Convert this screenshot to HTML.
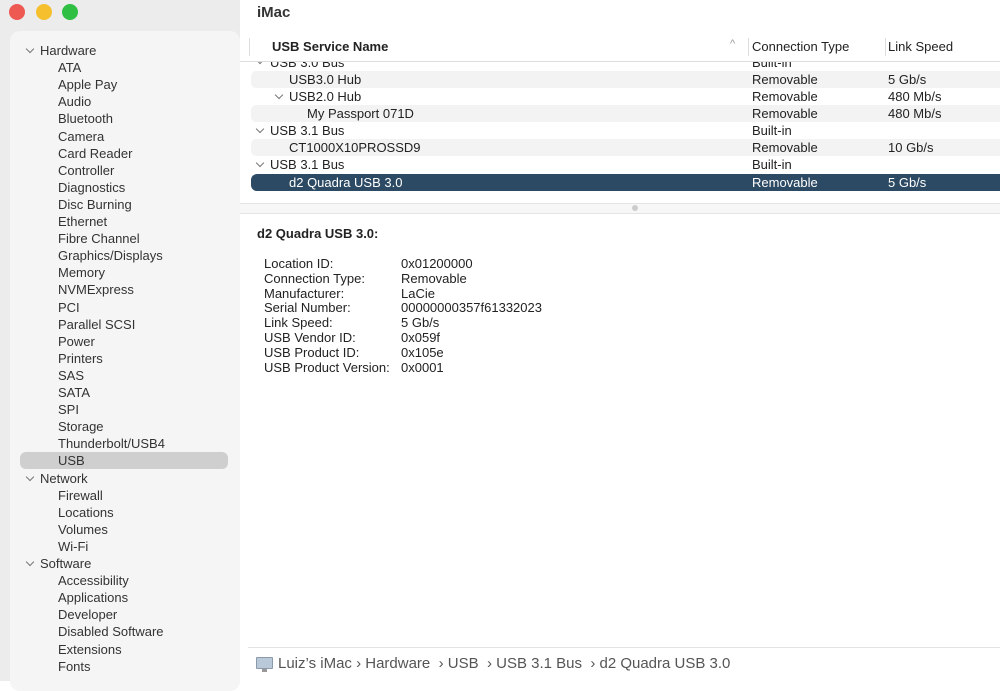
<!DOCTYPE html>
<html><head><meta charset="utf-8"><style>
*{margin:0;padding:0;box-sizing:border-box}
body{width:1000px;height:681px;overflow:hidden;font-family:"Liberation Sans",sans-serif;font-size:13px;color:#222;background:#fff;position:relative}
.side{position:absolute;left:0;top:0;width:240px;height:681px;background:#ececec}
.panel{position:absolute;left:10px;top:31px;width:230px;height:660px;background:#f5f5f5;border-radius:10px}
.dot{position:absolute;top:4px;width:16px;height:16px;border-radius:50%}
.si{position:absolute;height:17px;line-height:17px;font-size:13px;color:#333}
.chev{display:inline-block;width:6px;height:6px;border-right:1.3px solid #777;border-bottom:1.3px solid #777;transform:rotate(45deg);position:absolute}
.main{position:absolute;left:240px;top:0;width:760px;height:681px;background:#fff}
.row{position:absolute;left:11px;width:749px;height:17px;line-height:17px}
.g{background:#f3f3f3;border-radius:5px 0 0 5px}
.c2{position:absolute;left:501px}.c3{position:absolute;left:637px}
.kv{position:absolute;left:24px;line-height:14.8px;font-size:13px}
</style></head><body>
<div class="side">
<div class="dot" style="left:9px;background:#ee5a52"></div>
<div class="dot" style="left:36px;background:#f5bf2e"></div>
<div class="dot" style="left:62px;background:#2fc043"></div>
<div class="panel"></div>
<div style="position:absolute;left:20px;top:452px;width:208px;height:17px;background:#cfcfcf;border-radius:6px"></div>
<div id="sb"></div>
</div>
<div class="main">
<div style="position:absolute;left:17px;top:4px;font-size:15px;font-weight:bold;color:#333">iMac</div>
<div style="position:absolute;left:9px;top:38px;width:1px;height:18px;background:#ddd"></div>
<div style="position:absolute;left:32px;top:39px;font-weight:bold">USB Service Name</div>
<div style="position:absolute;left:490px;top:38px;color:#999;font-size:11px">^</div>
<div style="position:absolute;left:508px;top:38px;width:1px;height:18px;background:#ddd"></div>
<div style="position:absolute;left:512px;top:39px">Connection Type</div>
<div style="position:absolute;left:645px;top:38px;width:1px;height:18px;background:#ddd"></div>
<div style="position:absolute;left:648px;top:39px">Link Speed</div>
<div style="position:absolute;left:0;top:61px;width:760px;height:1px;background:#ddd"></div>
<div style="position:absolute;left:0;top:62px;width:760px;height:130px;overflow:hidden">
<div class="row" style="top:-8px"><span class="chev" style="left:6px;top:3px"></span><span style="position:absolute;left:19px">USB 3.0 Bus</span><span class="c2">Built-in</span></div>
<div class="row g" style="top:9px"><span style="position:absolute;left:38px">USB3.0 Hub</span><span class="c2">Removable</span><span class="c3">5 Gb/s</span></div>
<div class="row" style="top:26px"><span class="chev" style="left:25px;top:4px"></span><span style="position:absolute;left:38px">USB2.0 Hub</span><span class="c2">Removable</span><span class="c3">480 Mb/s</span></div>
<div class="row g" style="top:43px"><span style="position:absolute;left:56px">My Passport 071D</span><span class="c2">Removable</span><span class="c3">480 Mb/s</span></div>
<div class="row" style="top:60px"><span class="chev" style="left:6px;top:4px"></span><span style="position:absolute;left:19px">USB 3.1 Bus</span><span class="c2">Built-in</span></div>
<div class="row g" style="top:77px"><span style="position:absolute;left:38px">CT1000X10PROSSD9</span><span class="c2">Removable</span><span class="c3">10 Gb/s</span></div>
<div class="row" style="top:94px"><span class="chev" style="left:6px;top:4px"></span><span style="position:absolute;left:19px">USB 3.1 Bus</span><span class="c2">Built-in</span></div>
<div class="row" style="top:112px;background:#2c4a63;color:#fff;border-radius:6px 0 0 6px"><span style="position:absolute;left:38px">d2 Quadra USB 3.0</span><span class="c2">Removable</span><span class="c3">5 Gb/s</span></div>
</div>
<div style="position:absolute;left:0;top:203px;width:760px;height:1px;background:#e4e4e4"></div>
<div style="position:absolute;left:0;top:204px;width:760px;height:9px;background:#f7f7f7"></div>
<div style="position:absolute;left:392px;top:205px;width:6px;height:6px;border-radius:50%;background:#ccc"></div>
<div style="position:absolute;left:0;top:213px;width:760px;height:1px;background:#e4e4e4"></div>
<div style="position:absolute;left:17px;top:226px;font-weight:bold">d2 Quadra USB 3.0:</div>
<div class="kv" style="top:257px">Location ID:<br>Connection Type:<br>Manufacturer:<br>Serial Number:<br>Link Speed:<br>USB Vendor ID:<br>USB Product ID:<br>USB Product Version:</div>
<div class="kv" style="top:257px;left:161px">0x01200000<br>Removable<br>LaCie<br>00000000357f61332023<br>5 Gb/s<br>0x059f<br>0x105e<br>0x0001</div>
<div style="position:absolute;left:8px;top:647px;width:752px;height:1px;background:#e2e2e2"></div>
<div style="position:absolute;left:16px;top:657px;width:17px;height:12px;background:#b9c9d9;border:1px solid #8a9aaa;border-radius:1px"></div>
<div style="position:absolute;left:22px;top:669px;width:5px;height:3px;background:#999"></div>
<div style="position:absolute;left:38px;top:655px;font-size:15px;color:#555">Luiz’s iMac › Hardware &nbsp;› USB &nbsp;› USB 3.1 Bus &nbsp;› d2 Quadra USB 3.0</div>
</div>
<script>
var items=[["Hardware",1],"ATA","Apple Pay","Audio","Bluetooth","Camera","Card Reader","Controller","Diagnostics","Disc Burning","Ethernet","Fibre Channel","Graphics/Displays","Memory","NVMExpress","PCI","Parallel SCSI","Power","Printers","SAS","SATA","SPI","Storage","Thunderbolt/USB4","USB",["Network",1],"Firewall","Locations","Volumes","Wi-Fi",["Software",1],"Accessibility","Applications","Developer","Disabled Software","Extensions","Fonts"];
var h="";items.forEach(function(it,i){var y=42+i*17.1;if(Array.isArray(it)){h+='<span class="chev" style="left:27px;top:'+(y+4)+'px"></span><div class="si" style="left:40px;top:'+y+'px">'+it[0]+'</div>';}else{h+='<div class="si" style="left:58px;top:'+y+'px">'+it+'</div>';}});
document.getElementById("sb").innerHTML=h;
</script>
</body></html>
